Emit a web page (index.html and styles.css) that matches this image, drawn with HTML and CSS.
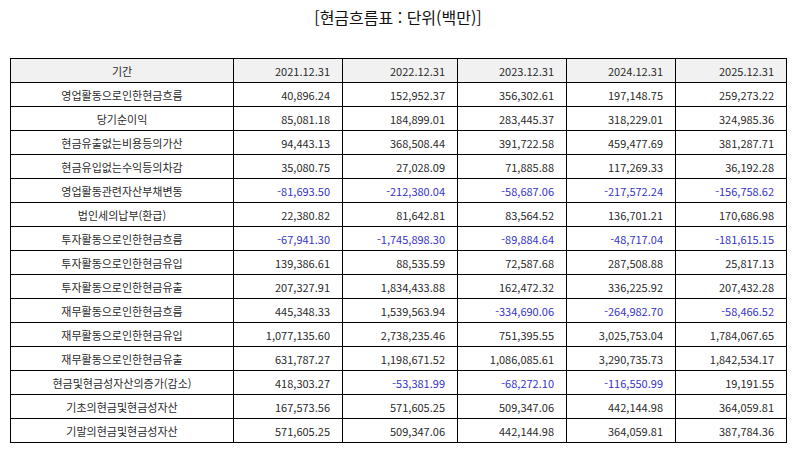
FILE: index.html
```html
<!DOCTYPE html>
<html lang="ko">
<head>
<meta charset="utf-8">
<title>현금흐름표</title>
<link rel="stylesheet" href="styles.css">
</head>
<body>
<div class="page">
  <h1 class="title">[현금흐름표 : 단위(백만)]</h1>
  <table class="cf">
    <colgroup>
      <col class="c-label">
      <col class="c-num">
      <col class="c-num2">
      <col class="c-num">
      <col class="c-num">
      <col class="c-num3">
    </colgroup>
    <thead>
      <tr><th class="lbl">기간</th><th>2021.12.31</th><th>2022.12.31</th><th>2023.12.31</th><th>2024.12.31</th><th>2025.12.31</th></tr>
    </thead>
    <tbody>
      <tr><td class="lbl">영업활동으로인한현금흐름</td><td>40,896.24</td><td>152,952.37</td><td>356,302.61</td><td>197,148.75</td><td>259,273.22</td></tr>
      <tr><td class="lbl">당기순이익</td><td>85,081.18</td><td>184,899.01</td><td>283,445.37</td><td>318,229.01</td><td>324,985.36</td></tr>
      <tr><td class="lbl">현금유출없는비용등의가산</td><td>94,443.13</td><td>368,508.44</td><td>391,722.58</td><td>459,477.69</td><td>381,287.71</td></tr>
      <tr><td class="lbl">현금유입없는수익등의차감</td><td>35,080.75</td><td>27,028.09</td><td>71,885.88</td><td>117,269.33</td><td>36,192.28</td></tr>
      <tr><td class="lbl">영업활동관련자산부채변동</td><td class="neg">-81,693.50</td><td class="neg">-212,380.04</td><td class="neg">-58,687.06</td><td class="neg">-217,572.24</td><td class="neg">-156,758.62</td></tr>
      <tr><td class="lbl">법인세의납부(환급)</td><td>22,380.82</td><td>81,642.81</td><td>83,564.52</td><td>136,701.21</td><td>170,686.98</td></tr>
      <tr><td class="lbl">투자활동으로인한현금흐름</td><td class="neg">-67,941.30</td><td class="neg">-1,745,898.30</td><td class="neg">-89,884.64</td><td class="neg">-48,717.04</td><td class="neg">-181,615.15</td></tr>
      <tr><td class="lbl">투자활동으로인한현금유입</td><td>139,386.61</td><td>88,535.59</td><td>72,587.68</td><td>287,508.88</td><td>25,817.13</td></tr>
      <tr><td class="lbl">투자활동으로인한현금유출</td><td>207,327.91</td><td>1,834,433.88</td><td>162,472.32</td><td>336,225.92</td><td>207,432.28</td></tr>
      <tr><td class="lbl">재무활동으로인한현금흐름</td><td>445,348.33</td><td>1,539,563.94</td><td class="neg">-334,690.06</td><td class="neg">-264,982.70</td><td class="neg">-58,466.52</td></tr>
      <tr><td class="lbl">재무활동으로인한현금유입</td><td>1,077,135.60</td><td>2,738,235.46</td><td>751,395.55</td><td>3,025,753.04</td><td>1,784,067.65</td></tr>
      <tr><td class="lbl">재무활동으로인한현금유출</td><td>631,787.27</td><td>1,198,671.52</td><td>1,086,085.61</td><td>3,290,735.73</td><td>1,842,534.17</td></tr>
      <tr><td class="lbl">현금및현금성자산의증가(감소)</td><td>418,303.27</td><td class="neg">-53,381.99</td><td class="neg">-68,272.10</td><td class="neg">-116,550.99</td><td>19,191.55</td></tr>
      <tr><td class="lbl">기초의현금및현금성자산</td><td>167,573.56</td><td>571,605.25</td><td>509,347.06</td><td>442,144.98</td><td>364,059.81</td></tr>
      <tr><td class="lbl">기말의현금및현금성자산</td><td>571,605.25</td><td>509,347.06</td><td>442,144.98</td><td>364,059.81</td><td>387,784.36</td></tr>
    </tbody>
  </table>
</div>
</body>
</html>
```

FILE: styles.css
```css
html, body {
  margin: 0;
  padding: 0;
  background: #ffffff;
}

.page {
  width: 794px;
  height: 452px;
  padding: 7px 8px 0 10px;
  box-sizing: border-box;
  font-family: "Noto Sans CJK KR", "Noto Sans", sans-serif;
  color: #2a2a2a;
}

.title {
  margin: 0 0 30px 0;
  height: 21px;
  line-height: 21px;
  font-size: 16px;
  font-weight: normal;
  text-align: center;
  color: #111111;
}

.cf {
  width: 776px;
  border-collapse: collapse;
  table-layout: fixed;
  font-size: 11px;
}

.c-label { width: 223px; }
.c-num { width: 109px; }
.c-num2 { width: 115px; }
.c-num3 { width: 111px; }

.cf th,
.cf td {
  height: 24px;
  padding: 0 12px 0 4px;
  border: 1px solid #000000;
  text-align: right;
  font-weight: normal;
  line-height: 14px;
  white-space: nowrap;
  overflow: hidden;
  box-sizing: border-box;
}

.cf thead th {
  background: #f1f1f1;
}

.cf .lbl {
  text-align: center;
  padding: 0 4px;
}

.cf .neg {
  color: #3434c8;
}
```
